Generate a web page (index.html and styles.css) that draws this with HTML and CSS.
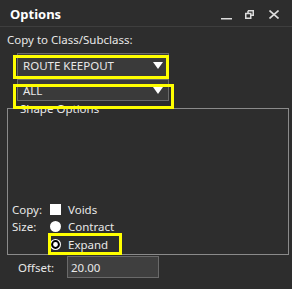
FILE: index.html
```html
<!DOCTYPE html>
<html lang="en">
<head>
    <meta charset="UTF-8">
    <title>Options</title>
    <link rel="stylesheet" href="styles.css">
</head>
<body>
    <div class="window">
        <div class="titlebar">
            <span class="title">Options</span>
            <div class="controls">
                <svg class="ctl-min" width="11" height="10" viewBox="0 0 11 10"><rect x="0" y="7" width="11" height="1.5" fill="#dcdcdc"/></svg>
                <svg class="ctl-restore" width="9" height="9" viewBox="0 0 9 9"><path d="M3 0.75H8.25V5.25H6.5M0.75 3.5H5.75V8.25H0.75Z M3 0.75V3.5" fill="none" stroke="#dcdcdc" stroke-width="1.5"/></svg>
                <svg class="ctl-close" width="10" height="9" viewBox="0 0 10 9"><path d="M0.5 0.5L9.5 8.5M9.5 0.5L0.5 8.5" stroke="#dcdcdc" stroke-width="1.6"/></svg>
            </div>
        </div>

        <div class="content">
            <div class="caption">Copy to Class/Subclass:</div>

            <div class="combo combo-class">
                <span>ROUTE KEEPOUT</span>
                <svg class="arrow" width="10" height="7" viewBox="0 0 10 7"><path d="M0 0H10L5 7Z" fill="#fff"/></svg>
            </div>
            <div class="combo combo-sub">
                <span>ALL</span>
                <svg class="arrow" width="10" height="7" viewBox="0 0 10 7"><path d="M0 0H10L5 7Z" fill="#fff"/></svg>
            </div>

            <fieldset class="group">
                <legend>Shape Options</legend>
                <div class="row">
                    <span class="row-label">Copy:</span>
                    <span class="check"></span>
                    <span>Voids</span>
                </div>
                <div class="row">
                    <span class="row-label">Size:</span>
                    <svg class="radio" width="11" height="11" viewBox="0 0 11 11"><circle cx="5.5" cy="5.5" r="5.5" fill="#fff"/></svg>
                    <span>Contract</span>
                </div>
                <div class="row">
                    <span class="row-label"></span>
                    <svg class="radio" width="11" height="11" viewBox="0 0 11 11"><circle cx="5.5" cy="5.5" r="5.5" fill="#fff"/><circle cx="5.5" cy="5.5" r="3.4" fill="#fff" stroke="#000" stroke-width="2"/></svg>
                    <span>Expand</span>
                </div>
            </fieldset>

            <div class="offset-row">
                <span class="offset-label">Offset:</span>
                <div class="textbox">20.00</div>
            </div>
        </div>

        <!-- highlight marks -->
        <div class="mark mark-class"></div>
        <div class="mark mark-sub"></div>
        <div class="mark mark-expand"></div>
    </div>
</body>
</html>
```

FILE: styles.css
```css
* {
    margin: 0;
    padding: 0;
    box-sizing: border-box;
}

body {
    background-color: #2d2d2d;
    color: #e8e8e8;
    font-family: 'Noto Sans', 'Open Sans', sans-serif;
    font-size: 11.5px;
}

.window {
    position: relative;
    width: 292px;
    height: 289px;
    background-color: #2d2d2d;
}

.titlebar {
    height: 27px;
    display: flex;
    align-items: center;
    justify-content: space-between;
    padding: 2px 0 0 10px;
    border-bottom: 1px solid #3e3e3e;
}

.title {
    font-weight: bold;
    font-size: 13px;
    color: #ffffff;
}

.controls {
    display: flex;
    align-items: center;
    padding-right: 13px;
}

.ctl-min {
    margin-right: 13px;
    margin-top: 4px;
}

.ctl-restore {
    margin-right: 15px;
}

.caption {
    margin: 5px 0 0 7px;
    line-height: 16px;
}

.combo {
    width: 152px;
    margin-left: 17px;
    display: flex;
    align-items: center;
    justify-content: space-between;
    padding: 0 5px 0 5px;
    background-color: #3a3a3a;
    border: 1px solid #6a6a6a;
}

.combo-class {
    height: 25px;
    margin-top: 5px;
}

.combo-sub {
    height: 22px;
    margin-top: 1px;
}

.arrow {
    display: block;
}

.group {
    margin: 0 3px 0 7px;
    height: 154px;
    border: 1px solid #8a8a8a;
    padding: 0 0 1px 4px;
    display: flex;
    flex-direction: column;
    justify-content: flex-end;
}

.group legend {
    margin-left: 6px;
    padding: 0 2px;
    line-height: 15px;
}

.row {
    display: flex;
    align-items: center;
    height: 17.5px;
}

.row-label {
    width: 38px;
}

.check {
    width: 11px;
    height: 11px;
    background-color: #ffffff;
}

.radio {
    display: block;
}

.row .check,
.row .radio {
    margin-right: 7px;
}

.offset-row {
    display: flex;
    align-items: center;
    margin-top: 1px;
    padding-left: 18px;
}

.offset-label {
    width: 49px;
}

.textbox {
    width: 92px;
    height: 22px;
    padding: 3px 0 0 3px;
    background-color: #3f3f3f;
    border: 1px solid #6a6a6a;
}

.mark {
    position: absolute;
    border: 3px solid #ffff00;
}

.mark-class {
    left: 13px;
    top: 55px;
    width: 156px;
    height: 24px;
}

.mark-sub {
    left: 13px;
    top: 84px;
    width: 161px;
    height: 25px;
}

.mark-expand {
    left: 48px;
    top: 233px;
    width: 74px;
    height: 22px;
}
```
